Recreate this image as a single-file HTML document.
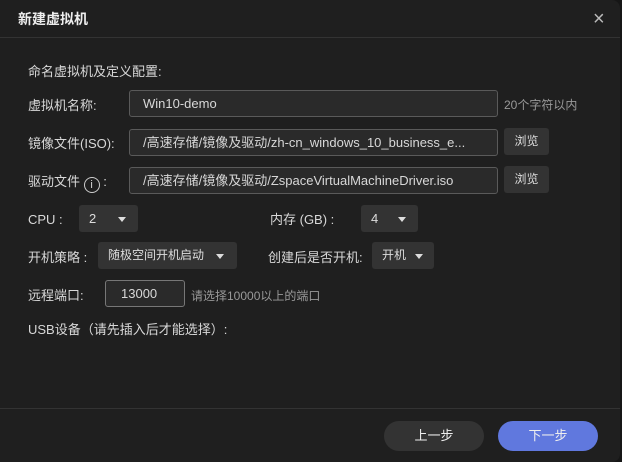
<!DOCTYPE html>
<html><head><meta charset="utf-8"><style>
*{box-sizing:border-box;margin:0;padding:0}
body{width:622px;height:462px;background:#161616;font-family:"Liberation Sans","Noto Sans CJK SC",sans-serif;color:#d8d8d8;font-size:13px;position:relative;overflow:hidden}
.dlg{position:absolute;left:0;top:0;width:620px;height:462px;background:#1f1f1f;border-radius:0 8px 8px 0}
.a{position:absolute;white-space:nowrap;line-height:18px}
.hd{left:18px;top:10px;font-size:14px;font-weight:bold;color:#eee}
.line{position:absolute;left:0;width:620px;height:1px;background:#333}
.inp{position:absolute;border:1px solid #5a5a5a;border-radius:3px;background:#2a2a2a;color:#d8d8d8;padding-left:13px;line-height:25px;height:27px;white-space:nowrap;overflow:hidden}
.btn{position:absolute;background:#333;border-radius:3px;height:27px;line-height:27px;text-align:center;color:#ddd;font-size:12px}
.sel{position:absolute;background:#333;border-radius:3px;height:27px;line-height:27px;color:#ddd;padding-left:10px}
.sel i{position:absolute;top:12px;width:0;height:0;border-left:4px solid transparent;border-right:4px solid transparent;border-top:5px solid #ddd}
.fb{position:absolute;top:421px;width:100px;height:30px;border-radius:15px;line-height:30px;text-align:center;color:#eee}
.hint{color:#999;font-size:12px}
</style></head><body>
<div class="dlg">
<div class="a hd">新建虚拟机</div>
<div class="a" style="left:593px;top:10px;font-size:20px;color:#bbb">×</div>
<div class="line" style="top:37px"></div>
<div class="a" style="left:28px;top:63px">命名虚拟机及定义配置:</div>
<div class="a" style="left:28px;top:97px">虚拟机名称:</div>
<div class="inp" style="left:129px;top:90px;width:369px">Win10-demo</div>
<div class="a hint" style="left:504px;top:96px">20个字符以内</div>
<div class="a" style="left:28px;top:135px">镜像文件(ISO):</div>
<div class="inp" style="left:129px;top:129px;width:369px">/高速存储/镜像及驱动/zh-cn_windows_10_business_e...</div>
<div class="btn" style="left:504px;top:128px;width:45px">浏览</div>
<div class="a" style="left:28px;top:173px">驱动文件 <span style="display:inline-block;width:16px;height:16px;border:1px solid #ccc;border-radius:50%;text-align:center;line-height:14px;font-size:11px;vertical-align:-2px">i</span> :</div>
<div class="inp" style="left:129px;top:167px;width:369px">/高速存储/镜像及驱动/ZspaceVirtualMachineDriver.iso</div>
<div class="btn" style="left:504px;top:166px;width:45px">浏览</div>
<div class="a" style="left:28px;top:211px">CPU :</div>
<div class="sel" style="left:79px;top:205px;width:59px">2<i style="left:39px"></i></div>
<div class="a" style="left:270px;top:211px">内存 (GB) :</div>
<div class="sel" style="left:361px;top:205px;width:57px">4<i style="left:37px"></i></div>
<div class="a" style="left:28px;top:249px">开机策略 :</div>
<div class="sel" style="left:98px;top:242px;width:139px;font-size:12px">随极空间开机启动<i style="left:118px"></i></div>
<div class="a" style="left:268px;top:249px">创建后是否开机:</div>
<div class="sel" style="left:372px;top:242px;width:62px;font-size:12px">开机<i style="left:43px"></i></div>
<div class="a" style="left:28px;top:287px">远程端口:</div>
<div class="inp" style="left:105px;top:280px;width:80px;padding-left:15px;border-color:#777">13000</div>
<div class="a hint" style="left:191px;top:287px">请选择10000以上的端口</div>
<div class="a" style="left:28px;top:321px">USB设备（请先插入后才能选择）:</div>
<div class="line" style="top:408px"></div>
<div class="fb" style="left:384px;background:#333">上一步</div>
<div class="fb" style="left:498px;background:#6078de">下一步</div>
</div>
</body></html>
